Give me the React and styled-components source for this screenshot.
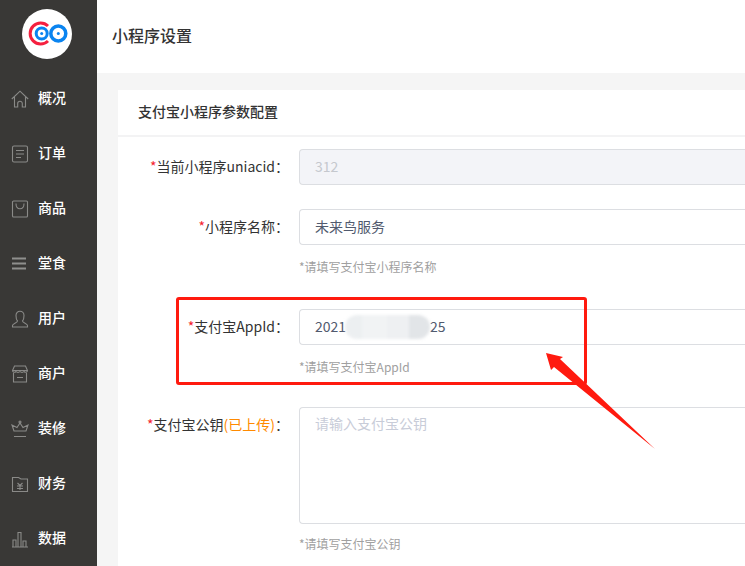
import React from 'react'
import styled, { createGlobalStyle } from 'styled-components'

const Global = createGlobalStyle`
  html, body { margin: 0; padding: 0; height: 100%; overflow: hidden; background: #f5f5f5; }
  body { font-family: "Noto Sans CJK SC", "Noto Sans", sans-serif; color: #333; }
  * { box-sizing: border-box; }
`

const Page = styled.div`
  position: relative;
  display: flex;
  width: 745px;
  height: 566px;
  overflow: hidden;
`

const Sidebar = styled.nav`
  flex: 0 0 97px;
  background: #393836;
  display: flex;
  flex-direction: column;
  padding-top: 9px;
`

const Logo = styled.div`
  width: 50px;
  height: 50px;
  margin: 0 0 13px 22px;
  flex: none;
  border-radius: 50%;
  background: #fff;
`

const MenuItem = styled.a`
  width: 100%;
  height: 55px;
  flex: none;
  display: flex;
  align-items: center;
  padding: 0 0 5px 11px;
  gap: 9px;
  color: #fff;
  font-size: 14px;
  font-weight: 500;
  svg { flex: none; margin-top: 4px; }
`

const Main = styled.main`
  flex: 1;
  min-width: 0;
  display: flex;
  flex-direction: column;
`

const Header = styled.header`
  flex: 0 0 73px;
  background: #fff;
  display: flex;
  align-items: center;
  padding: 0 0 4px 15px;
  font-size: 16px;
  font-weight: 500;
  color: #333;
`

const Content = styled.div`
  flex: 1;
  padding: 17px 0 0 21px;
`

const Card = styled.section`
  background: #fff;
  width: 640px;
  min-height: 500px;
`

const CardTitle = styled.h2`
  margin: 0;
  height: 47px;
  display: flex;
  align-items: center;
  padding: 0 0 4px 20px;
  font-size: 14px;
  font-weight: 500;
  color: #333;
  border-bottom: 2px solid #f3f3f4;
`

const Form = styled.div`
  display: flex;
  flex-direction: column;
  padding-top: 12px;
`

const Row = styled.div`
  display: grid;
  grid-template-columns: 181px 1fr;
  margin-bottom: ${p => p.$gap}px;
`

const Label = styled.label`
  height: 36px;
  display: flex;
  align-items: center;
  justify-content: flex-end;
  padding: 0 10px 2px 0;
  font-size: 14px;
  color: #333;
  white-space: nowrap;
`

const Star = styled.span`
  color: #f5222d;
`

const Uploaded = styled.span`
  color: #ff8a00;
`

const Input = styled.div`
  height: 36px;
  display: flex;
  align-items: center;
  padding: 0 0 2px 15px;
  font-size: 14px;
  border: 1px solid #dcdee2;
  border-right: 0;
  border-radius: 4px 0 0 4px;
  color: ${p => (p.$disabled ? '#c5c8ce' : '#515a6e')};
  background: ${p => (p.$disabled ? '#f3f4f8' : '#fff')};
`

const TextArea = styled(Input)`
  height: 117px;
  align-items: flex-start;
  padding-top: 5px;
  color: #c8ccd8;
`

const Hint = styled.div`
  margin: ${p => p.$top || 13}px 0 9px;
  height: 18px;
  line-height: 18px;
  font-size: 12px;
  color: #a0a0a0;
`

// blurred-out part of the app id
const Masked = styled.span`
  display: block;
  width: 85px;
  height: 24px;
  margin: 2px 0 0 -1px;
  border-radius: 12px;
  background: linear-gradient(90deg, #eceff1 0 20%, #f1f3f4 20% 50%, #eef0f2 50% 75%, #e2e5e8 75%);
  filter: blur(1.5px);
`

const Annotation = styled.div`
  position: absolute;
  left: 176px;
  top: 297px;
  width: 411px;
  height: 88px;
  border: 3px solid #ff1a0f;
  border-radius: 3px;
  pointer-events: none;
`

const ArrowMark = styled.svg`
  position: absolute;
  left: 540px;
  top: 345px;
`

const icon = { width: 18, height: 18, viewBox: '0 0 18 18', fill: 'none', stroke: '#8a8a88', strokeWidth: 1.1 }

const icons = {
  home: <svg {...icon}><path d="M.8 9 9 1.200 17.200 9M3.500 7v10h3.200v-3.500a2.300 2.300 0 0 1 4.600 0V17h3.200V7" /></svg>,
  order: <svg {...icon}><rect x="1.500" y="1" width="15" height="16" rx="1.500" /><path d="M5 5.500h8M5 9h8M5 12.500h5" /></svg>,
  goods: <svg {...icon}><rect x="1.500" y="1" width="15" height="16" rx="1" /><path d="M5 3.500c0 7 8 7 8 0" /></svg>,
  menu: <svg {...icon} stroke="#8f8f8d" strokeWidth="2.200"><path d="M1 3.500h14M1 8.500h14M1 13.500h14" /></svg>,
  user: <svg {...icon}><path d="M1.500 17v-1.500c0-2 5-2.500 5-4.500C5 9.500 5 7.500 5 5.500a4 4.300 0 0 1 8 0c0 2 0 4-1.500 5.500 0 2 5 2.500 5 4.500V17z" /></svg>,
  shop: <svg {...icon}><path d="M3.500 1h11l2 4.500c0 1.500-2 2.500-3.500 1-1 1.200-3 1.200-4 0-1 1.200-3 1.200-4 0C3.500 8 1.500 7 1.500 5.500zM2.500 8v9h13V8M1.500 5.500h15M6 12.500h6" /></svg>,
  crown: <svg {...icon}><path d="M3 11 1 5l5 2.500L9 3l3 4.500L17 5l-2 6zM3 16.500h12" /><circle cx="9" cy="2" r="1" /></svg>,
  wallet: <svg {...icon}><path d="M1.500 4V2.500h6L10 4h6.500v12.500h-15zM1.500 4v3M6.500 8 9 10.500 11.500 8M6 11h6M6 13.500h6M9 10.500V15" /></svg>,
  chart: <svg {...icon}><path d="M1 17h16M2 17v-7h3v7M7 17V2.500h3V17M12 17v-6h3v6" /></svg>,
}

const menu = [
  ['home', '概况'],
  ['order', '订单'],
  ['goods', '商品'],
  ['menu', '堂食'],
  ['user', '用户'],
  ['shop', '商户'],
  ['crown', '装修'],
  ['wallet', '财务'],
  ['chart', '数据'],
]

const App = () => (
  <Page>
    <Global />
    <Sidebar>
      <Logo>
        <svg width="50" height="50" viewBox="0 0 50 50" fill="none">
          <path d="M26 17a10.500 10.500 0 1 0 0 15" stroke="#f5203f" strokeWidth="3" />
          <circle cx="19.700" cy="24.500" r="5.500" stroke="#0a84f0" strokeWidth="3" />
          <circle cx="36.300" cy="24.500" r="7.500" stroke="#0a84f0" strokeWidth="3.500" />
          <circle cx="36.300" cy="24.500" r="1.500" fill="#0a84f0" />
          <circle cx="19.700" cy="24.500" r="1.500" fill="#0a84f0" />
        </svg>
      </Logo>
      {menu.map(([key, name]) => (
        <MenuItem key={name}>
          {icons[key]}
          {name}
        </MenuItem>
      ))}
    </Sidebar>
    <Main>
      <Header>小程序设置</Header>
      <Content>
        <Card>
          <CardTitle>支付宝小程序参数配置</CardTitle>
          <Form>
            <Row $gap={24}>
              <Label><Star>*</Star>当前小程序uniacid：</Label>
              <Input $disabled>312</Input>
            </Row>
            <Row $gap={24}>
              <Label><Star>*</Star>小程序名称：</Label>
              <div>
                <Input>未来鸟服务</Input>
                <Hint>*请填写支付宝小程序名称</Hint>
              </div>
            </Row>
            <Row $gap={22}>
              <Label><Star>*</Star>支付宝AppId：</Label>
              <div>
                <Input>2021<Masked />25</Input>
                <Hint>*请填写支付宝AppId</Hint>
              </div>
            </Row>
            <Row $gap={0}>
              <Label><Star>*</Star>支付宝公钥<Uploaded>(已上传)</Uploaded>：</Label>
              <div>
                <TextArea>请输入支付宝公钥</TextArea>
                <Hint $top={11}>*请填写支付宝公钥</Hint>
              </div>
            </Row>
          </Form>
        </Card>
      </Content>
    </Main>
    <Annotation />
    <ArrowMark width="120" height="110" viewBox="0 0 120 110">
      <path d="M6 8 23 12 20 14 115 104 14 22 11 25Z" fill="#ff1a0f" />
    </ArrowMark>
  </Page>
)

export default App
